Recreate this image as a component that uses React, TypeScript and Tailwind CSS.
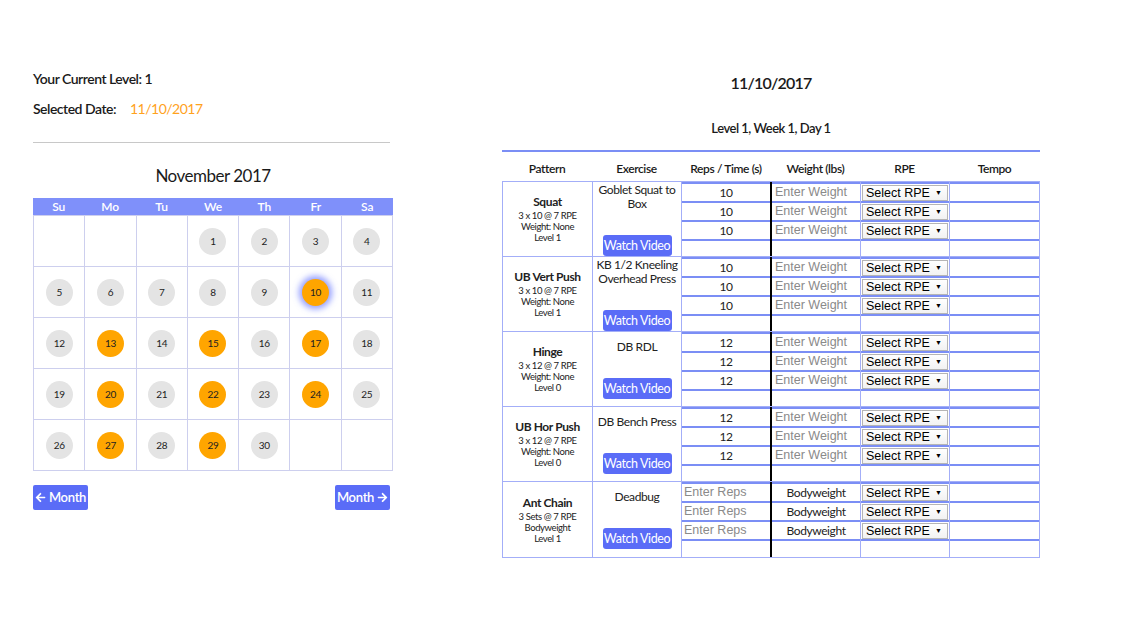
import { FaArrowLeft, FaArrowRight } from 'react-icons/fa';

const LINE = 'border-[#7b8ef5]';
const THIN = 'border-[#a3aef8]';

interface Group {
  pattern: string;
  scheme: string;
  load: string;
  level: string;
  exercise: string[];
  reps: string | null;
  bodyweight?: boolean;
}

const groups: Group[] = [
  { pattern: 'Squat', scheme: '3 x 10 @ 7 RPE', load: 'Weight: None', level: 'Level 1', exercise: ['Goblet Squat to', 'Box'], reps: '10' },
  { pattern: 'UB Vert Push', scheme: '3 x 10 @ 7 RPE', load: 'Weight: None', level: 'Level 1', exercise: ['KB 1/2 Kneeling', 'Overhead Press'], reps: '10' },
  { pattern: 'Hinge', scheme: '3 x 12 @ 7 RPE', load: 'Weight: None', level: 'Level 0', exercise: ['DB RDL'], reps: '12' },
  { pattern: 'UB Hor Push', scheme: '3 x 12 @ 7 RPE', load: 'Weight: None', level: 'Level 0', exercise: ['DB Bench Press'], reps: '12' },
  { pattern: 'Ant Chain', scheme: '3 Sets @ 7 RPE', load: 'Bodyweight', level: 'Level 1', exercise: ['Deadbug'], reps: null, bodyweight: true },
];

const highlighted = [13, 15, 17, 20, 22, 24, 27, 29];
const selectedDay = 10;

function Calendar() {
  // November 2017 starts on a Wednesday
  const cells: (number | null)[] = [null, null, null];
  for (let d = 1; d <= 30; d++) cells.push(d);
  while (cells.length < 35) cells.push(null);

  return (
    <div className="w-[360px]">
      <div className="grid grid-cols-7 h-[17px] bg-[#7f90fa]">
        {['Su', 'Mo', 'Tu', 'We', 'Th', 'Fr', 'Sa'].map((d) => (
          <div key={d} className="text-center text-white text-[12px] font-semibold leading-[17px]">
            {d}
          </div>
        ))}
      </div>
      <div className="grid grid-cols-7 border-l border-t border-[#cdcfee]">
        {cells.map((d, i) => (
          <div key={i} className="h-[51px] border-r border-b border-[#cdcfee] flex items-center justify-center">
            {d !== null && (
              <div
                className={
                  'w-[27px] h-[27px] rounded-full flex items-center justify-center text-[10px] tracking-[-0.3px] text-[#222] ' +
                  (d === selectedDay
                    ? 'bg-[#ffa500] shadow-[0_0_6px_3px_rgba(100,115,255,0.7)]'
                    : highlighted.includes(d)
                    ? 'bg-[#ffa500]'
                    : 'bg-[#e4e4e4]')
                }
              >
                {d}
              </div>
            )}
          </div>
        ))}
      </div>
    </div>
  );
}

function RpeSelect() {
  return (
    <div className="ml-[1px] w-[86px] h-[16px] border border-[#b5b5b5] bg-gradient-to-b from-white to-[#f2f2f2] flex items-center justify-between pl-[3px] pr-[5px] font-['Liberation_Sans',Arial,sans-serif] tracking-normal text-[12.5px] text-black leading-[14px]">
      <span>Select RPE</span>
      <span className="text-[7px]">▼</span>
    </div>
  );
}

function SubColumn({
  width,
  border,
  render,
}: {
  width: string;
  border: string;
  render: (i: number) => React.ReactNode;
}) {
  return (
    <div className={`${width} ${border} flex flex-col`}>
      {[0, 1, 2, 3].map((i) => (
        <div key={i} className={`${i < 3 ? 'h-[19px]' : 'flex-1'} border-t-2 ${LINE} flex items-center`}>
          {i < 3 ? render(i) : null}
        </div>
      ))}
    </div>
  );
}

function GroupRow({ g, last }: { g: Group; last: boolean }) {
  const arial = "font-['Liberation_Sans',Arial,sans-serif] tracking-normal text-[12.5px] text-[#8a8a8a]";
  return (
    <div className={`flex h-[75px] ${last ? '' : 'border-b ' + THIN}`}>
      <div className={`w-[90px] border-r ${THIN} flex flex-col items-center justify-center text-[#222]`}>
        <div className="text-[12px] font-bold leading-[14px]">{g.pattern}</div>
        <div className="text-[9.5px] leading-[11px] mt-[1px]">{g.scheme}</div>
        <div className="text-[9.5px] leading-[11px]">{g.load}</div>
        <div className="text-[9.5px] leading-[11px]">{g.level}</div>
      </div>
      <div className={`w-[89px] border-r ${THIN} flex flex-col items-center justify-center`}>
        <div className="text-[12px] leading-[14px] text-center text-[#222]">
          {g.exercise.map((l) => (
            <div key={l}>{l}</div>
          ))}
        </div>
        <button className="mt-[24px] w-[69px] h-[21px] rounded-[3px] bg-[#5a6cf7] text-white text-[12.5px] leading-[21px]">
          Watch Video
        </button>
      </div>
      <SubColumn
        width="w-[90px]"
        border="border-r-2 border-r-black"
        render={() =>
          g.reps ? (
            <div className="w-full text-center text-[12px] text-[#222]">{g.reps}</div>
          ) : (
            <div className={`w-full pl-[2px] ${arial}`}>Enter Reps</div>
          )
        }
      />
      <SubColumn
        width="w-[89px]"
        border="border-r border-r-[#a3aef8]"
        render={() =>
          g.bodyweight ? (
            <div className="w-full text-center text-[12px] text-[#222]">Bodyweight</div>
          ) : (
            <div className={`w-full pl-[3px] ${arial}`}>Enter Weight</div>
          )
        }
      />
      <SubColumn width="w-[89px]" border="border-r border-r-[#a3aef8]" render={() => <RpeSelect />} />
      <SubColumn width="flex-1" border="" render={() => null} />
    </div>
  );
}

export default function App() {
  return (
    <div className="w-[1125px] h-[643px] bg-white flex font-['Lato','Open_Sans',sans-serif] text-[#1a1a1a]">
      {/* Left: level + calendar */}
      <div className="ml-[33px] w-[360px] flex flex-col">
        <div className="mt-[71px] text-[14px] font-semibold leading-[16px] tracking-[-0.5px]">Your Current Level: 1</div>
        <div className="mt-[14px] text-[14px] font-semibold leading-[16px] tracking-[-0.5px] flex">
          <span>Selected Date:</span>
          <span className="ml-[14px] text-[#ffa21d] font-normal">11/10/2017</span>
        </div>
        <div className="mt-[25px] w-[357px] h-px bg-[#c8c8c8]" />
        <div className="mt-[22px] text-center text-[17px] leading-[22px] tracking-[-0.5px]">November 2017</div>
        <div className="mt-[11px]">
          <Calendar />
        </div>
        <div className="mt-[14px] w-[357px] flex justify-between">
          <button className="w-[55px] h-[25px] rounded-[2px] bg-[#5a6cf7] text-white text-[13px] font-semibold tracking-[-0.3px] flex items-center justify-center gap-[3px]">
            <FaArrowLeft className="w-[11px] h-[11px]" />
            Month
          </button>
          <button className="w-[55px] h-[25px] rounded-[2px] bg-[#5a6cf7] text-white text-[13px] font-semibold tracking-[-0.3px] flex items-center justify-center gap-[3px]">
            Month
            <FaArrowRight className="w-[11px] h-[11px]" />
          </button>
        </div>
      </div>

      {/* Right: workout table */}
      <div className="ml-[109px] w-[538px] flex flex-col">
        <div className="mt-[72px] text-center text-[16px] font-semibold leading-[22px] tracking-[-0.8px]">11/10/2017</div>
        <div className="mt-[25px] text-center text-[13px] font-semibold leading-[18px] tracking-[-0.5px]">Level 1, Week 1, Day 1</div>
        <div className="mt-[13px] h-[2px] bg-[#7b8ef5]" />
        <div className="h-[29px] flex pt-[9px] text-[12px] font-semibold leading-[16px] tracking-[-0.4px] text-[#1a1a1a]">
          <div className="w-[90px] text-center">Pattern</div>
          <div className="w-[89px] text-center">Exercise</div>
          <div className="w-[90px] text-center">Reps / Time (s)</div>
          <div className="w-[89px] text-center">Weight (lbs)</div>
          <div className="w-[89px] text-center">RPE</div>
          <div className="flex-1 text-center">Tempo</div>
        </div>
        <div className={`border ${THIN} tracking-[-0.4px]`}>
          {groups.map((g, i) => (
            <GroupRow key={g.pattern} g={g} last={i === groups.length - 1} />
          ))}
        </div>
      </div>
    </div>
  );
}
